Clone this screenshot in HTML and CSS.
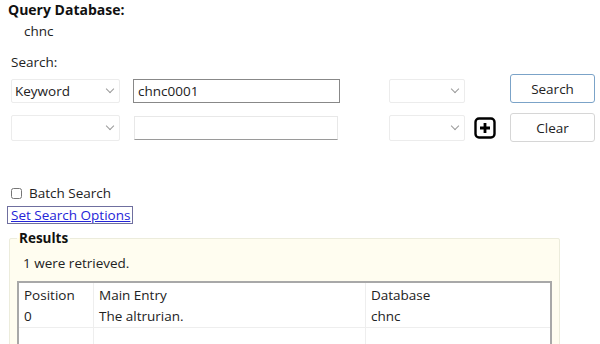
FILE: index.html
```html
<!DOCTYPE html>
<html lang="en">
<head>
    <meta charset="UTF-8">
    <title>Query Database</title>
    <link rel="stylesheet" href="styles.css">
</head>
<body>
    <div class="page">
        <h2 class="title">Query Database:</h2>
        <div class="dbname">chnc</div>

        <div class="label">Search:</div>
        <div class="row first-row">
            <div class="select wide"><span>Keyword</span><span class="caret"></span></div>
            <input class="term outlined" type="text" value="chnc0001">
            <div class="select small"><span></span><span class="caret"></span></div>
            <span class="add-slot"></span>
            <button class="btn primary">Search</button>
        </div>
        <div class="row second-row">
            <div class="select wide tall"><span></span><span class="caret"></span></div>
            <input class="term" type="text" value="">
            <div class="select small"><span></span><span class="caret"></span></div>
            <span class="add-slot">
                <svg width="22" height="22" viewBox="0 0 22 22">
                    <rect x="1.5" y="1.5" width="19" height="19" rx="3.5" fill="none" stroke="#000" stroke-width="2.4"/>
                    <path d="M11 6v10M6 11h10" stroke="#000" stroke-width="2.8"/>
                </svg>
            </span>
            <button class="btn">Clear</button>
        </div>

        <label class="batch"><input type="checkbox"> Batch Search</label>
        <a class="options" href="#">Set Search Options</a>

        <fieldset class="results">
            <legend>Results</legend>
            <div class="count">1 were retrieved.</div>
            <table class="grid">
                <tr class="head">
                    <td class="c1">Position</td>
                    <td class="c2">Main Entry</td>
                    <td class="c3">Database</td>
                </tr>
                <tr>
                    <td>0</td>
                    <td>The altrurian.</td>
                    <td>chnc</td>
                </tr>
                <tr class="empty">
                    <td></td>
                    <td></td>
                    <td></td>
                </tr>
            </table>
        </fieldset>
    </div>
</body>
</html>
```

FILE: styles.css
```css
body {
    margin: 0;
    font-family: "Open Sans", "Noto Sans", sans-serif;
    font-size: 13.5px;
    color: #222;
    background: #ffffff;
}

.page {
    padding: 0 0 0 8px;
}

.title {
    margin: 0;
    padding-top: 1px;
    font-size: 14px;
    font-weight: 700;
    line-height: 18px;
    color: #111;
}

.dbname {
    margin: 3px 0 0 16px;
    line-height: 18px;
}

.label {
    margin: 13px 0 0 3px;
    line-height: 18px;
}

.row {
    display: flex;
    align-items: center;
    margin-left: 3px;
}

.row > * {
    flex-shrink: 0;
}

.first-row {
    margin-top: 3px;
    height: 29px;
    align-items: flex-end;
}

.second-row {
    margin-top: 10px;
    height: 29px;
}

.select {
    height: 24px;
    box-sizing: border-box;
    border: 1px solid #ececec;
    border-radius: 2px;
    background: #fff;
    display: flex;
    align-items: center;
    justify-content: space-between;
    padding: 0 6px 0 3px;
    color: #222;
}

.select.wide {
    width: 109px;
    margin-right: 13px;
}

.select.tall {
    height: 26px;
}

.select.small {
    width: 76px;
    margin-left: 49px;
}

.second-row .select.small {
    margin-left: 51px;
    height: 26px;
}

.caret {
    width: 5px;
    height: 5px;
    border-right: 1px solid #9a9a9a;
    border-bottom: 1px solid #9a9a9a;
    transform: rotate(45deg);
    margin-top: -4px;
}

.term {
    height: 24px;
    box-sizing: border-box;
    font: inherit;
    color: #222;
    border: 1px solid #e8e8e8;
    border-bottom: 1px solid #9a9a9a;
    padding: 0 4px;
    width: 204px;
    margin-left: 1px;
    outline: none;
}

.term.outlined {
    border: 1px solid #888;
    width: 207px;
    margin-left: 0;
}

.add-slot {
    display: flex;
    width: 22px;
    height: 22px;
    margin: 0 14px 0 9px;
}

.btn {
    font: inherit;
    height: 29px;
    width: 85px;
    background: #fff;
    border: 1px solid #d6d6d6;
    border-radius: 3px;
    color: #222;
    padding: 0;
}

.btn.primary {
    border-color: #7ba3c8;
}

.batch {
    display: flex;
    align-items: center;
    gap: 7px;
    margin: 42px 0 0 3px;
    line-height: 18px;
}

.batch input {
    margin: 0;
    width: 11px;
    height: 11px;
}

.options {
    display: inline-block;
    margin-top: 4px;
    margin-left: -1px;
    padding: 0 2px 0 3px;
    border: 1px solid #6f6f9f;
    color: #2424d8;
    line-height: 16px;
}

.results {
    margin: 6px 0 0 1px;
    width: 550px;
    box-sizing: border-box;
    padding: 0 7px 0 7px;
    border: 1px solid #ececdc;
    border-radius: 2px;
    background: #fffdf0;
}

.results legend {
    font-weight: 700;
    color: #111;
    padding: 0 2px;
    margin-left: 0;
    line-height: 16px;
}

.count {
    margin: 8px 0 0 6px;
    line-height: 18px;
}

.grid {
    margin-top: 9px;
    width: 535px;
    border-collapse: collapse;
    border: 2px solid #a8a8a8;
    background: #fff;
}

.grid td {
    padding: 0 5px;
    line-height: 21px;
    border-left: 1px solid #eeeeee;
    vertical-align: middle;
}

.grid .head td {
    padding-top: 2px;
}

.grid .c1 { width: 64px; }
.grid .c2 { width: 261px; }

.grid .empty td {
    height: 21px;
    border-top: 1px solid #eeeeee;
}
```
